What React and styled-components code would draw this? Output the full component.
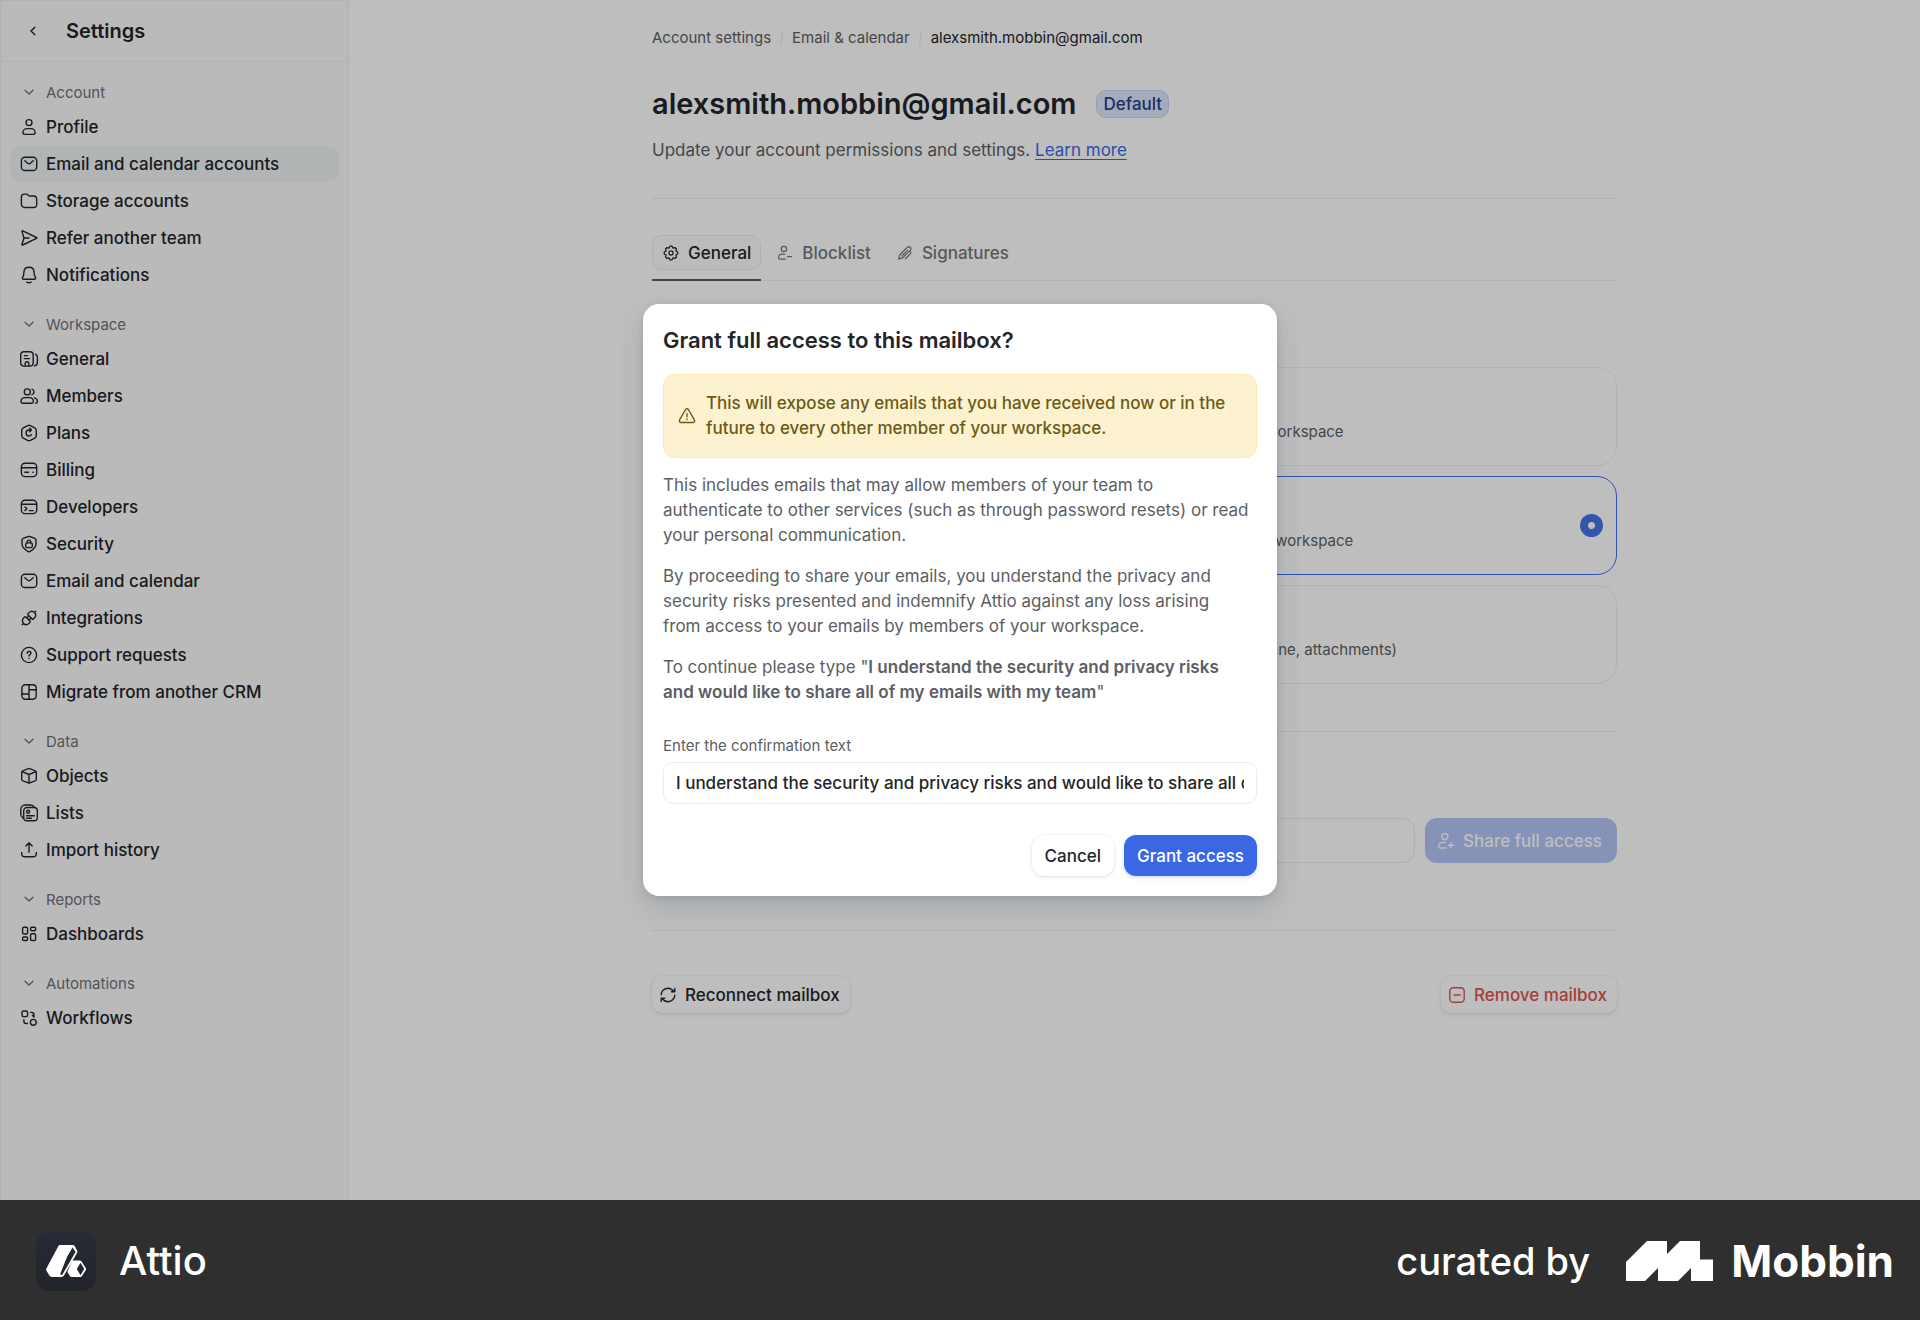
import React, { useState } from "react";
import styled, { createGlobalStyle, css } from "styled-components";

const icons = {
  back: <path d="M10.8 5.2 7 9l3.8 3.8" />,
  chevron: <path d="M5 7.2 9 11l4-3.8" />,
  profile: (
    <>
      <circle cx="9" cy="4.6" r="3" />
      <path d="M2.9 14.6c0-2.5 2-4 4.1-4h4c2.1 0 4.1 1.5 4.1 4 0 1-.8 1.8-1.8 1.8H4.7c-1 0-1.8-.8-1.8-1.8z" />
    </>
  ),
  mail: (
    <>
      <rect x="1.4" y="2.2" width="15.3" height="13.3" rx="3.6" />
      <path d="m4.8 5.8 2.900 2.400c.8.6 1.8.6 2.6 0l2.900-2.400" />
    </>
  ),
  folder: (
    <path d="M1.4 5c0-1.7 1.2-2.9 2.9-2.9h1.9c.8 0 1.5.4 2 1 .4.6 1.1.9 1.8.9h3.5c1.8 0 3.2 1.4 3.2 3.2v5c0 1.9-1.4 3.3-3.2 3.3h-9c-1.7 0-3.1-1.4-3.1-3.3z" />
  ),
  send: (
    <>
      <path d="M1.9 2.4c0-.5.4-.7.8-.5L16.5 8.5c.4.2.4.7 0 .9L2.7 16c-.5.2-.9 0-.8-.5L4 9z" />
      <path d="M4 9h5" />
    </>
  ),
  bell: (
    <>
      <path d="M9 1.3c-2.9 0-4.9 2.1-5.1 4.8l-.2 2.6c0 .4-.2.8-.4 1.2l-.8 1.7c-.3.8.1 1.7 1 1.7h11c.9 0 1.3-.9 1-1.7l-.8-1.7c-.2-.4-.4-.8-.4-1.2l-.2-2.6C13.9 3.4 11.9 1.3 9 1.3z" />
      <path d="M6.9 16.1c1.2.8 3 .8 4.2 0" />
    </>
  ),
  building: (
    <>
      <rect x=".7" y="1.8" width="12.5" height="14.3" rx="3.3" />
      <path d="M4.3 5.6h3.2M4.3 8.6h5.2M5.2 16v-2.4c0-1 .8-1.8 1.8-1.8s1.8.8 1.8 1.8V16M15.5 4.2c1.2.6 1.9 1.7 1.9 3v5.2c0 1.7-1.2 3.1-2.9 3.5" />
    </>
  ),
  members: (
    <>
      <circle cx="7.3" cy="4.9" r="3" />
      <path d="M1 14.6c0-2.5 1.9-4 4.1-4h4.2c2.2 0 4.1 1.5 4.1 4 0 1-.7 1.7-1.7 1.7h-9c-1 0-1.7-.7-1.7-1.7zM12 2.1c1.2.4 2 1.5 2 2.8s-.8 2.4-2 2.8M14.5 10.8c1.7.5 2.9 1.9 2.9 3.7 0 1-.7 1.7-1.7 1.7" />
    </>
  ),
  plans: (
    <>
      <path d="M7.6 1.6c.9-.4 1.9-.4 2.8 0l4.3 2.3c1 .5 1.6 1.5 1.6 2.6v5c0 1.1-.6 2.1-1.6 2.6l-4.3 2.3c-.9.4-1.9.4-2.8 0l-4.3-2.3c-1-.5-1.6-1.5-1.6-2.6v-5c0-1.1.6-2.1 1.6-2.600z" />
      <path d="M11.4 6H9C7.4 6 6.1 7.3 6.1 9S7.4 12 9 12c1 0 1.9-.5 2.4-1.3M9.7 4.2 11.5 6 9.700 7.800" />
    </>
  ),
  billing: (
    <>
      <rect x="1.4" y="2.3" width="15.3" height="13.3" rx="3.6" />
      <path d="M1.4 6.7h15.2M4.8 11.2h3.7M12.8 11.2h.4" />
    </>
  ),
  developers: (
    <>
      <rect x="1.4" y="2.3" width="15.3" height="13.3" rx="3.6" />
      <path d="M1.4 6.3h15.2M5 9.1l1.8 1.7L5 12.5M9.3 12.6h3.9" />
    </>
  ),
  security: (
    <>
      <path d="M8.3 1.5c.5-.2 1-.2 1.4 0l5.1 1.9c.7.3 1.2.9 1.2 1.7v3.5c0 3.6-2.5 6.2-6.2 8-.5.2-1.1.2-1.6 0-3.7-1.8-6.2-4.4-6.2-8V5.1c0-.8.5-1.4 1.2-1.7z" />
      <rect x="5.7" y="7.9" width="6.6" height="4.7" rx="1.4" />
      <path d="M7.2 7.8v-.9c0-1 .8-1.8 1.8-1.8s1.8.8 1.8 1.8v.9" />
    </>
  ),
  integrations: (
    <g transform="rotate(-45 9 9)">
      <path d="M11.5 5.2h1.3c2.3 0 3.9 1.7 3.9 3.8s-1.6 3.8-3.9 3.8h-1.3c-.6 0-1-.4-1-1V6.2c0-.6.4-1 1-1z" />
      <path d="M6.5 5.2H5.2C2.9 5.2 1.3 6.9 1.3 9s1.6 3.8 3.9 3.8h1.3c.6 0 1-.4 1-1V6.2c0-.6-.4-1-1-1z" />
      <path d="M7.5 7.5h3M7.5 10.5h3M16.7 9h1.7M-.4 9h1.7" />
    </g>
  ),
  support: (
    <>
      <circle cx="9" cy="9" r="7.6" />
      <path d="M7.1 7.2c.1-1 .9-1.7 1.9-1.7 1.1 0 1.9.7 1.9 1.7 0 1.4-1.9 1.4-1.9 2.7M9 12.3v.2" />
    </>
  ),
  migrate: (
    <>
      <rect x="1.9" y="1.7" width="14.3" height="14.5" rx="3.4" />
      <path d="M9 1.7v14.5M9 6.8h7.2M1.9 11h7.1" />
    </>
  ),
  objects: (
    <>
      <path d="M8.3 1.7c.5-.2.9-.2 1.4 0l5.5 2.1c.7.3 1.1.9 1.1 1.6v6.8c0 .7-.4 1.3-1.1 1.6l-5.5 2.1c-.5.2-.9.2-1.4 0l-5.5-2.1c-.7-.3-1.1-.9-1.1-1.6V5.4c0-.7.4-1.3 1.1-1.6z" />
      <path d="M2.1 4.6 9 7.5l6.9-2.9M9 7.5v8.4" />
    </>
  ),
  lists: (
    <>
      <rect x="3.7" y="3.5" width="13.6" height="13.3" rx="3.3" />
      <path d="M2.6 13.7c-1-.8-1.8-2-1.8-3.4V5.5C.8 3 2.7 1 5.2 1h5.3c1.3 0 2.5.6 3.3 1.5M6.6 11.7h7.7M6.6 14.2h4.8" />
      <circle cx="8.1" cy="7.8" r="1.5" />
    </>
  ),
  upload: <path d="M9 11.3V1.9M5.8 5 9 1.8 12.2 5M1.7 11.5v1c0 1.9 1.3 3.3 3.2 3.3h8.2c1.9 0 3.2-1.4 3.2-3.3v-1" />,
  dashboards: (
    <>
      <rect x="2.6" y="2.2" width="5" height="6.8" rx="1.3" />
      <rect x="10.6" y="2.2" width="5" height="3.5" rx="1.2" />
      <rect x="2.6" y="12" width="5" height="3.5" rx="1.2" />
      <rect x="10.6" y="8.7" width="5" height="6.8" rx="1.3" />
    </>
  ),
  workflows: (
    <>
      <rect x="2" y="2" width="5.6" height="5.6" rx="1.5" />
      <circle cx="13.3" cy="13.3" r="2.9" />
      <path d="M10.6 3.4h1.2c1.2 0 2.2 1 2.2 2.2v1.7M12.4 6.3 14 7.9M3.9 10.6v1.7c0 1.2 1 2.2 2.2 2.2h1.4" />
    </>
  ),
  gear: (
    <>
      <path d="M7.8 1.4h2.4L11.26 3.55 13.47 2.85 15.15 4.53 14.45 6.74 16.6 7.8v2.4L14.45 11.26 15.15 13.47 13.47 15.15 11.26 14.45 10.2 16.6H7.8L6.74 14.45 4.53 15.15 2.85 13.47 3.55 11.26 1.4 10.2V7.8L3.55 6.74 2.85 4.53 4.53 2.85 6.74 3.55z" />
      <circle cx="9" cy="9" r="2.3" />
    </>
  ),
  userMinus: (
    <>
      <circle cx="7.8" cy="4.5" r="3" />
      <path d="M9.5 16H3.4c-1 0-1.7-.7-1.7-1.6 0-2.5 2-4 4.3-4h2.7M11.7 13.2h4.8" />
    </>
  ),
  userPlus: (
    <>
      <circle cx="7.8" cy="4.5" r="3" />
      <path d="M9.5 16H3.4c-1 0-1.7-.7-1.7-1.6 0-2.5 2-4 4.3-4h2.7M11.5 13.2h4.9M13.95 10.8v4.9" />
    </>
  ),
  pen: (
    <path d="M1.9 15.9 3 11.3 11.7 2.6c.9-.9 2.4-.9 3.2 0 .9.9.9 2.3 0 3.2L6.5 14.3zM5.6 12.3l6.2-6.2M9.6 15.4l5.2-5.2c.8-.8.8-2 .1-2.8" />
  ),
  warning: (
    <>
      <path d="M7.6 2.5c.6-1 2.2-1 2.8 0l6 10.4c.7 1.2-.1 2.6-1.4 2.6H3c-1.3 0-2.1-1.4-1.4-2.6z" />
      <path d="M9 6.7v3M9 12v.5" />
    </>
  ),
  refresh: (
    <path d="M2.2 8.6C2.4 5 5.3 2.3 8.9 2.3c2.5 0 4.6 1.3 5.9 3.3M15.8 2.4v3.4h-3.4M15.8 9.3c-.2 3.6-3.1 6.4-6.8 6.4-2.5 0-4.6-1.3-5.9-3.3M2.2 15.6v-3.4h3.4" />
  ),
  minusSquare: (
    <>
      <rect x="1.8" y="1.8" width="14.4" height="14.4" rx="3.5" />
      <path d="M5.9 9h6.2" />
    </>
  ),
};

const Icon = ({ name, size = 18 }) => (
  <Svg viewBox="0 0 18 18" width={size} height={size} aria-hidden="true">
    {icons[name]}
  </Svg>
);

const sections = [
  {
    title: "Account",
    items: [
      { icon: "profile", label: "Profile" },
      { icon: "mail", label: "Email and calendar accounts", active: true },
      { icon: "folder", label: "Storage accounts" },
      { icon: "send", label: "Refer another team" },
      { icon: "bell", label: "Notifications" },
    ],
  },
  {
    title: "Workspace",
    items: [
      { icon: "building", label: "General" },
      { icon: "members", label: "Members" },
      { icon: "plans", label: "Plans" },
      { icon: "billing", label: "Billing" },
      { icon: "developers", label: "Developers" },
      { icon: "security", label: "Security" },
      { icon: "mail", label: "Email and calendar" },
      { icon: "integrations", label: "Integrations" },
      { icon: "support", label: "Support requests" },
      { icon: "migrate", label: "Migrate from another CRM" },
    ],
  },
  {
    title: "Data",
    items: [
      { icon: "objects", label: "Objects" },
      { icon: "lists", label: "Lists" },
      { icon: "upload", label: "Import history" },
    ],
  },
  {
    title: "Reports",
    items: [{ icon: "dashboards", label: "Dashboards" }],
  },
  {
    title: "Automations",
    items: [{ icon: "workflows", label: "Workflows" }],
  },
];

const tabs = [
  { id: "general", icon: "gear", label: "General" },
  { id: "blocklist", icon: "userMinus", label: "Blocklist" },
  { id: "signatures", icon: "pen", label: "Signatures" },
];

const sharingOptions = [
  {
    id: "metadata",
    description: "Only share metadata (participants, time) of your emails with your workspace",
  },
  {
    id: "subject",
    description: "Only email metadata (participants, time) and subject line with your workspace",
  },
  {
    id: "full",
    description: "Share the email contents with your workspace (metadata, subject line, attachments)",
  },
];

const Sidebar = () => (
  <SidebarWrap>
    <SidebarHeader>
      <BackButton aria-label="Back">
        <Icon name="back" />
      </BackButton>
      <SidebarTitle>Settings</SidebarTitle>
    </SidebarHeader>
    <Nav>
      {sections.map((section) => (
        <div key={section.title}>
          <SectionButton>
            <Icon name="chevron" />
            {section.title}
          </SectionButton>
          <NavList>
            {section.items.map((item) => (
              <li key={item.label}>
                <NavLink href="#" $active={item.active}>
                  <Icon name={item.icon} />
                  {item.label}
                </NavLink>
              </li>
            ))}
          </NavList>
        </div>
      ))}
    </Nav>
  </SidebarWrap>
);

const MailboxSettings = () => {
  const [tab, setTab] = useState("general");
  const [sharing, setSharing] = useState("subject");

  return (
    <Main>
      <Content>
        <Breadcrumb aria-label="Breadcrumb">
          <Crumb href="#">Account settings</Crumb>
          <Slash />
          <Crumb href="#">Email &amp; calendar</Crumb>
          <Slash />
          <Crumb href="#" $current>
            alexsmith.mobbin@gmail.com
          </Crumb>
        </Breadcrumb>

        <TitleRow>
          <PageTitle>alexsmith.mobbin@gmail.com</PageTitle>
          <Badge>Default</Badge>
        </TitleRow>
        <Subtitle>
          Update your account permissions and settings. <a href="#">Learn more</a>
        </Subtitle>
        <Divider $space={36} />

        <TabBar role="tablist">
          {tabs.map((t) => (
            <TabSlot key={t.id} $active={t.id === tab}>
              <Tab
                role="tab"
                aria-selected={t.id === tab}
                $active={t.id === tab}
                onClick={() => setTab(t.id)}
              >
                <Icon name={t.icon} size={16} />
                {t.label}
              </Tab>
            </TabSlot>
          ))}
        </TabBar>

        <Section>
          <Options>
            {sharingOptions.map((option) => (
              <OptionCard key={option.id} $selected={option.id === sharing}>
                <OptionDescription>{option.description}</OptionDescription>
                <Radio
                  name="sharing"
                  checked={option.id === sharing}
                  onChange={() => setSharing(option.id)}
                />
              </OptionCard>
            ))}
          </Options>
        </Section>
        <Divider $space={47} />

        <Section>
          <ShareRow>
            <ShareInput aria-label="Members" />
            <ShareButton disabled>
              <Icon name="userPlus" />
              Share full access
            </ShareButton>
          </ShareRow>
        </Section>
        <Divider $space={67} />

        <MailboxActions>
          <MailboxButton>
            <Icon name="refresh" />
            Reconnect mailbox
          </MailboxButton>
          <MailboxButton $danger>
            <Icon name="minusSquare" />
            Remove mailbox
          </MailboxButton>
        </MailboxActions>
      </Content>
    </Main>
  );
};

const GrantAccessModal = () => {
  const phrase =
    "I understand the security and privacy risks and would like to share all of my emails with my team";
  const [value, setValue] = useState(phrase);

  return (
    <Overlay>
      <Modal role="dialog" aria-modal="true" aria-labelledby="grant-title">
        <ModalTitle id="grant-title">Grant full access to this mailbox?</ModalTitle>
        <Warning>
          <Icon name="warning" />
          <p>
            This will expose any emails that you have received now or in the future to every
            other member of your workspace.
          </p>
        </Warning>
        <ModalBody>
          <p>
            This includes emails that may allow members of your team to authenticate to other
            services (such as through password resets) or read your personal communication.
          </p>
          <p>
            By proceeding to share your emails, you understand the privacy and security risks
            presented and indemnify Attio against any loss arising
            <br />
            from access to your emails by members of your workspace.
          </p>
          <p>
            To continue please type "
            <strong>
              I understand the security and privacy risks
              <br />
              and would like to share all of my emails with my team
            </strong>
            "
          </p>
        </ModalBody>
        <Label htmlFor="confirmation">Enter the confirmation text</Label>
        <ConfirmInput
          id="confirmation"
          value={value}
          onChange={(e) => setValue(e.target.value)}
        />
        <ModalActions>
          <ModalButton>Cancel</ModalButton>
          <ModalButton $primary disabled={value !== phrase}>
            Grant access
          </ModalButton>
        </ModalActions>
      </Modal>
    </Overlay>
  );
};

const Footer = () => (
  <FooterWrap>
    <Brand>
      <AppIcon>
        <svg viewBox="0 0 42 34" width="42" height="34" aria-hidden="true">
          <path
            d="M15 1h12.5c1 0 1.8.5 2.3 1.3L32 6.2c.5.9.5 1.9 0 2.7L19.6 30.6c-.9 1.6-1.7 2.4-3.3 2.4H7c-1.3 0-2-.4-2.6-1.4L1.5 26.8c-.5-.9-.5-1.7 0-2.6L13.3 2.2C13.7 1.4 14.2 1 15 1z"
            fill="#fff"
          />
          <path d="M27.5 3.5 30.5 8 17 31.3 15.2 30 22 13z" fill="#22252d" />
          <path
            d="M28.5 16.5h6.2c.9 0 1.5.4 2 1.2l4 6.2c.5.8.5 1.5 0 2.3l-3.6 5.6c-.5.8-1.1 1.2-2 1.2h-8.3c-1 0-1.6-.4-2.1-1.2l-2-3.2c-.3-.6-.3-1.1 0-1.7l4-9.2c.5-.8.9-1.2 1.8-1.2z"
            fill="#fff"
          />
          <path d="m35.5 18.8 3.7 6.2-3.7 6.2-3.7-6.2z" fill="#22252d" />
        </svg>
      </AppIcon>
      Attio
    </Brand>
    <Curated>
      curated by
      <Mobbin>
        <svg viewBox="0 0 87 40" width="87" height="40" aria-hidden="true">
          <path
            d="M0 21 21 0h20v13L54 0h20v18.5h13V40H65V27L52 40H32V27L19 40H0z"
            fill="#fff"
          />
        </svg>
        Mobbin
      </Mobbin>
    </Curated>
  </FooterWrap>
);

const App = () => {
  return (
    <Page>
      <GlobalStyle />
      <Shell>
        <Sidebar />
        <MailboxSettings />
        <GrantAccessModal />
      </Shell>
      <Footer />
    </Page>
  );
};

const GlobalStyle = createGlobalStyle`
  * {
    box-sizing: border-box;
  }

  body {
    margin: 0;
    font-family: Inter, "Liberation Sans", sans-serif;
    font-size: 17px;
    color: #232529;
    background: #ffffff;
    -webkit-font-smoothing: antialiased;
  }

  h1, h2, p, ul {
    margin: 0;
    padding: 0;
  }

  button, input {
    font: inherit;
    color: inherit;
  }

  button {
    cursor: pointer;
  }
`;

const Svg = styled.svg`
  flex: none;
  overflow: visible;
  fill: none;
  stroke: currentColor;
  stroke-width: 1.4;
  stroke-linecap: round;
  stroke-linejoin: round;
`;

const Page = styled.div`
  display: flex;
  flex-direction: column;
  min-height: 100vh;
`;

const Shell = styled.div`
  position: relative;
  display: flex;
  flex: 1;
`;

const SidebarWrap = styled.aside`
  width: 349px;
  flex: none;
  background: #fafafb;
  border: solid #eeeff1;
  border-width: 1px 1px 0 1px;
`;

const SidebarHeader = styled.header`
  display: flex;
  align-items: center;
  gap: 17px;
  height: 61px;
  padding-left: 16px;
  border-bottom: 1px solid #eeeff1;
`;

const BackButton = styled.button`
  display: flex;
  align-items: center;
  justify-content: center;
  width: 32px;
  height: 32px;
  padding: 0;
  border: none;
  background: none;
`;

const SidebarTitle = styled.h2`
  font-size: 20px;
  line-height: 28px;
  font-weight: 600;
`;

const Nav = styled.nav`
  display: flex;
  flex-direction: column;
  gap: 15px;
  padding: 14px 9px;
`;

const SectionButton = styled.button`
  display: flex;
  align-items: center;
  gap: 8px;
  height: 32px;
  padding: 0 10px;
  border: none;
  background: none;
  font-size: 15px;
  color: #6f7176;
`;

const NavList = styled.ul`
  display: flex;
  flex-direction: column;
  gap: 1px;
  margin-top: 1px;
  list-style: none;
`;

const NavLink = styled.a`
  display: flex;
  align-items: center;
  gap: 8px;
  height: 36px;
  padding: 0 10px;
  border-radius: 10px;
  font-weight: 500;
  color: #232529;
  text-decoration: none;
  background: ${(props) => (props.$active ? "#eff3f5" : "transparent")};
`;

const Main = styled.main`
  flex: 1;
  min-width: 0;
  padding: 28px 40px;
`;

const Content = styled.div`
  max-width: 965px;
  margin: 0 auto;
`;

const Breadcrumb = styled.nav`
  display: flex;
  align-items: center;
  gap: 10px;
`;

const Crumb = styled.a`
  font-size: 15px;
  line-height: 20px;
  text-decoration: none;
  color: ${(props) => (props.$current ? "#232529" : "#5c5e63")};
`;

const Slash = styled.span`
  width: 1px;
  height: 14px;
  background: #e6e7ea;
  transform: rotate(8deg);
`;

const TitleRow = styled.div`
  display: flex;
  align-items: center;
  gap: 20px;
  height: 40px;
  margin-top: 36px;
`;

const PageTitle = styled.h1`
  font-size: 29px;
  line-height: 40px;
  font-weight: 600;
`;

const Badge = styled.span`
  padding: 0 6px;
  border: 1px solid #c9d3f5;
  border-radius: 10px;
  line-height: 26px;
  font-weight: 500;
  color: #24428f;
  background: #dfe6fb;
`;

const Subtitle = styled.p`
  margin-top: 14px;
  line-height: 24px;
  color: #5c5e63;

  a {
    color: #3b69e6;
    text-underline-offset: 3px;
  }
`;

const Divider = styled.hr`
  height: 1px;
  margin: ${(props) => props.$space}px 0 0;
  border: none;
  background: #eeeff1;
`;

const TabBar = styled.div`
  display: flex;
  gap: 5px;
  margin-top: 36px;
  box-shadow: inset 0 -1px #eeeff1;
`;

const TabSlot = styled.div`
  padding-bottom: 9px;
  border-bottom: 2px solid ${(props) => (props.$active ? "#5a5c60" : "transparent")};
`;

const Tab = styled.button`
  display: flex;
  align-items: center;
  gap: 9px;
  height: 35px;
  padding: 0 9px 0 10px;
  border: 1px solid ${(props) => (props.$active ? "#eaebed" : "transparent")};
  border-radius: 10px;
  font-weight: 500;
  color: ${(props) => (props.$active ? "#232529" : "#75777c")};
  background: ${(props) => (props.$active ? "#fbfbfb" : "none")};
`;

const Section = styled.section`
  padding-top: 86px;
`;

const Options = styled.div`
  display: flex;
  flex-direction: column;
  gap: 10px;
`;

const OptionCard = styled.label`
  display: flex;
  align-items: center;
  justify-content: space-between;
  height: 99px;
  padding: 0 13px 0 150px;
  border: 1px solid ${(props) => (props.$selected ? "#3f6ee8" : "#eeeff1")};
  border-radius: 20px;
`;

const OptionDescription = styled.span`
  padding-top: 30px;
  font-size: 15px;
  line-height: 20px;
  color: #5c5e63;
`;

const Radio = styled.input.attrs({ type: "radio" })`
  appearance: none;
  width: 23px;
  height: 23px;
  margin: 0;
  border-radius: 50%;

  &:checked {
    background: radial-gradient(circle, #ffffff 3px, #4672e8 4px);
  }
`;

const ShareRow = styled.div`
  display: flex;
  gap: 10px;
`;

const ShareInput = styled.input`
  flex: 1;
  min-width: 0;
  height: 45px;
  padding: 0 12px;
  border: 1px solid #eaebed;
  border-radius: 12px;
  background: none;
`;

const ShareButton = styled.button`
  display: flex;
  align-items: center;
  gap: 8px;
  height: 45px;
  padding: 0 15px 0 12px;
  border: none;
  border-radius: 12px;
  font-weight: 500;
  color: #ffffff;
  background: #b5c5f8;
`;

const MailboxActions = styled.div`
  display: flex;
  justify-content: space-between;
  margin-top: 45px;
`;

const MailboxButton = styled.button`
  display: flex;
  align-items: center;
  gap: 8px;
  height: 37px;
  padding: 0 10px 0 7px;
  border: none;
  border-radius: 10px;
  font-weight: 500;
  color: ${(props) => (props.$danger ? "#dc5450" : "#232529")};
  background: #ffffff;
  box-shadow:
    0 0 0 1px rgba(28, 40, 64, 0.04),
    0 2px 4px rgba(28, 40, 64, 0.08);
`;

const Overlay = styled.div`
  position: absolute;
  inset: 0;
  display: flex;
  align-items: center;
  justify-content: center;
  background: rgba(0, 0, 0, 0.255);
`;

const Modal = styled.div`
  width: 634px;
  padding: 20px;
  border-radius: 16px;
  background: #ffffff;
  box-shadow:
    0 2px 6px rgba(28, 40, 64, 0.12),
    0 12px 28px rgba(28, 40, 64, 0.14);
`;

const ModalTitle = styled.h2`
  font-size: 22px;
  line-height: 32px;
  font-weight: 600;
`;

const Warning = styled.div`
  display: flex;
  align-items: center;
  gap: 10px;
  margin: 18px 0 15px;
  padding: 16px 14px;
  border: 1px solid #fae9ac;
  border-radius: 12px;
  line-height: 25px;
  color: #6b5a17;
  background: #fdf2cf;

  p {
    font-weight: 500;
  }
`;

const ModalBody = styled.div`
  display: flex;
  flex-direction: column;
  gap: 16px;
  line-height: 25px;
  color: #5c5e63;

  strong {
    font-weight: 600;
  }
`;

const Label = styled.label`
  display: block;
  margin: 31px 0 6px;
  font-size: 15px;
  line-height: 20px;
  color: #5c5e63;
`;

const ConfirmInput = styled.input`
  display: block;
  width: 100%;
  height: 42px;
  padding: 0 12px;
  border: 1px solid #eaebed;
  border-radius: 10px;
  outline: none;
  font-weight: 500;
  background: #ffffff;
`;

const ModalActions = styled.div`
  display: flex;
  justify-content: flex-end;
  gap: 10px;
  margin-top: 31px;
`;

const ModalButton = styled.button`
  height: 41px;
  padding: 0 13px;
  border: none;
  border-radius: 12px;
  font-weight: 500;
  background: #ffffff;
  box-shadow:
    0 0 0 1px rgba(28, 40, 64, 0.04),
    0 2px 4px rgba(28, 40, 64, 0.08);

  ${(props) =>
    props.$primary &&
    css`
      color: #ffffff;
      background: #3a68e5;
      box-shadow: 0 2px 4px rgba(58, 104, 229, 0.2);
    `}
`;

const FooterWrap = styled.footer`
  display: flex;
  align-items: center;
  justify-content: space-between;
  height: 120px;
  padding: 1px 26px 0 36px;
  color: #ffffff;
  background: #2f2f2f;
`;

const Brand = styled.div`
  display: flex;
  align-items: center;
  gap: 23px;
  font-size: 40px;
  font-weight: 500;
`;

const AppIcon = styled.span`
  display: flex;
  align-items: center;
  justify-content: center;
  width: 60px;
  height: 60px;
  border-radius: 14px;
  background: linear-gradient(#262b36, #22242a);
`;

const Curated = styled.div`
  display: flex;
  align-items: center;
  gap: 36px;
  font-size: 38px;
  font-weight: 500;
`;

const Mobbin = styled.span`
  display: flex;
  align-items: center;
  gap: 18px;
  font-size: 44px;
  font-weight: 700;
`;

export default App;
